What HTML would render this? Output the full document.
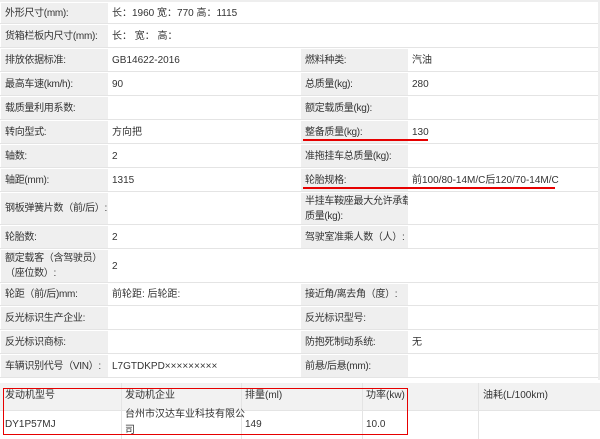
<!DOCTYPE html>
<html><head><meta charset="utf-8"><style>
*{margin:0;padding:0;box-sizing:border-box}
body{width:600px;height:439px;background:#fff;position:relative;overflow:hidden;font-family:"Liberation Sans","Noto Sans CJK SC",sans-serif;font-size:10px;color:#333}
.c{position:absolute;display:flex;align-items:center;padding-left:4px;line-height:15px;white-space:nowrap}
.l{background:#efefef;overflow:hidden;letter-spacing:-0.3px}
.v{background:#fff;padding-left:3px}
.r{position:absolute;background:#e60000;height:1.5px}
.ln{position:absolute;left:0;width:600px;height:1px;background:#e4e4e4}
</style></head><body>
<div id="t"></div>
<script>
var rows=[
[2,24,"外形尺寸(mm):","长：1960 宽：770 高：1115",null,null],
[24,48,"货箱栏板内尺寸(mm):","长： 宽： 高：",null,null],
[48,72,"排放依据标准:","GB14622-2016","燃料种类:","汽油"],
[72,96,"最高车速(km/h):","90","总质量(kg):","280"],
[96,120,"载质量利用系数:","","额定载质量(kg):",""],
[120,144,"转向型式:","方向把","整备质量(kg):","130"],
[144,168,"轴数:","2","准拖挂车总质量(kg):",""],
[168,192,"轴距(mm):","1315","轮胎规格:","前100/80-14M/C后120/70-14M/C"],
[192,225,"钢板弹簧片数（前/后）:","","半挂车鞍座最大允许承载<br>质量(kg):",""],
[225,249,"轮胎数:","2","驾驶室准乘人数（人）:",""],
[249,283,"额定载客（含驾驶员）<br>（座位数）:","2",null,null],
[283,306,"轮距（前/后)mm:","前轮距: 后轮距:","接近角/离去角（度）:",""],
[306,330,"反光标识生产企业:","","反光标识型号:",""],
[330,354,"反光标识商标:","","防抱死制动系统:","无"],
[354,378,"车辆识别代号（VIN）:","L7GTDKPD×××××××××","前悬/后悬(mm):",""]];
var h="";
rows.forEach(function(r){
var t=r[0]+1,ht=r[1]-r[0]-2;
h+='<div class="c l" style="left:1px;top:'+t+'px;width:107px;height:'+ht+'px">'+r[2]+'</div>';
if(r[4]===null){h+='<div class="c v" style="left:109px;top:'+t+'px;width:489px;height:'+ht+'px">'+r[3]+'</div>';}
else{h+='<div class="c v" style="left:109px;top:'+t+'px;width:190px;height:'+ht+'px">'+r[3]+'</div>';
h+='<div class="c l" style="left:301px;top:'+t+'px;width:107px;height:'+ht+'px">'+r[4]+'</div>';
h+='<div class="c v" style="left:409px;top:'+t+'px;width:189px;height:'+ht+'px">'+r[5]+'</div>';}
h+='<div class="ln" style="top:'+(r[1]-1)+'px"></div>';
});
document.getElementById("t").innerHTML=h;
</script>
<div style="position:absolute;left:0;top:0;width:600px;height:2px;background:#eee"></div>
<div style="position:absolute;left:598px;top:0;width:2px;height:380px;background:#eee"></div>
<div style="position:absolute;left:0;top:383px;width:600px;height:27px;background:#f2f2f2"></div>
<div style="position:absolute;left:0;top:410px;width:600px;height:1px;background:#e4e4e4"></div>
<div style="position:absolute;left:121px;top:383px;width:1px;height:56px;background:#e4e4e4"></div>
<div style="position:absolute;left:241px;top:383px;width:1px;height:56px;background:#e4e4e4"></div>
<div style="position:absolute;left:362px;top:383px;width:1px;height:56px;background:#e4e4e4"></div>
<div style="position:absolute;left:478px;top:383px;width:1px;height:56px;background:#e4e4e4"></div>
<div class="c" style="left:1px;top:384px;height:22px">发动机型号</div>
<div class="c" style="left:121px;top:384px;height:22px">发动机企业</div>
<div class="c" style="left:241px;top:384px;height:22px">排量(ml)</div>
<div class="c" style="left:362px;top:384px;height:22px">功率(kw)</div>
<div class="c" style="left:479px;top:384px;height:22px">油耗(L/100km)</div>
<div class="c" style="left:1px;top:411px;height:26px">DY1P57MJ</div>
<div class="c" style="left:121px;top:408px;height:30px;width:120px;line-height:16px">台州市汉达车业科技有限公<br>司</div>
<div class="c" style="left:241px;top:411px;height:26px">149</div>
<div class="c" style="left:362px;top:411px;height:26px">10.0</div>
<div style="position:absolute;left:3px;top:388px;width:405px;height:47px;border:1.5px solid #e60000"></div>
<div class="r" style="left:303px;top:139px;width:125px"></div>
<div class="r" style="left:303px;top:187px;width:252px"></div>
</body></html>
